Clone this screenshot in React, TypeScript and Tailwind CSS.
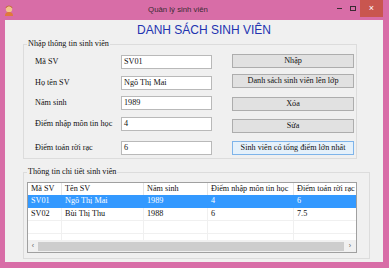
const serif = "font-['Liberation_Serif','Times_New_Roman',serif]";

type Student = { id: string; name: string; year: string; it: string; math: string };

const students: Student[] = [
  { id: 'SV01', name: 'Ngô Thị Mai', year: '1989', it: '4', math: '6' },
  { id: 'SV02', name: 'Bùi Thị Thu', year: '1988', it: '6', math: '7.5' },
];

const fields = [
  { label: 'Mã SV', value: 'SV01', mt: 'mt-[5px]' },
  { label: 'Họ tên SV', value: 'Ngô Thị Mai', mt: 'mt-[7px]' },
  { label: 'Năm sinh', value: '1989', mt: 'mt-[6px]' },
  { label: 'Điểm nhập môn tin học', value: '4', mt: 'mt-[7px]' },
  { label: 'Điểm toán rời rạc', value: '6', mt: 'mt-[10px]' },
];

const buttons = [
  { text: 'Nhập', mt: 'mt-[4px]' },
  { text: 'Danh sách sinh viên lên lớp', mt: 'mt-[6px]' },
  { text: 'Xóa', mt: 'mt-[9px]' },
  { text: 'Sửa', mt: 'mt-[8px]' },
  { text: 'Sinh viên có tổng điểm lớn nhất', mt: 'mt-[8px]', active: true },
];

const cols: { title: string; w: string; get: (s: Student) => string }[] = [
  { title: 'Mã SV', w: 'w-[34px]', get: (s) => s.id },
  { title: 'Tên SV', w: 'w-[82px]', get: (s) => s.name },
  { title: 'Năm sinh', w: 'w-[64px]', get: (s) => s.year },
  { title: 'Điểm nhập môn tin học', w: 'w-[86px]', get: (s) => s.it },
  { title: 'Điểm toán rời rạc', w: 'w-[70px]', get: (s) => s.math },
];

const AppIcon = () => (
  <svg width="10" height="11" viewBox="0 0 10 11">
    <circle cx="5" cy="4" r="3.2" fill="#f2c48a" />
    <path d="M1.8 3.2 Q5 -0.6 8.2 3.2 L8.2 2 Q5 -1.2 1.8 2 Z" fill="#b4542c" />
    <path d="M1 11 Q1 7 5 7 Q9 7 9 11 Z" fill="#e0793a" />
  </svg>
);

const App = () => {
  return (
    <div className="w-[389px] h-[268px] bg-[#d86da7] flex flex-col overflow-hidden">
      {/* Title bar */}
      <div className="h-[20px] flex items-center relative">
        <div className="pl-[4px] pt-[1px]">
          <AppIcon />
        </div>
        <div className="flex-1 text-center text-[7.8px] text-[#3a2a33] font-['Liberation_Sans',Arial,sans-serif] pl-[10px]">
          Quản lý sinh viên
        </div>
        <div className="flex items-start h-full">
          <div className="w-[14px] h-[17px] flex items-center justify-center">
            <div className="w-[5px] h-[1px] bg-[#3a2a33]" />
          </div>
          <div className="w-[14px] h-[17px] flex items-center justify-center">
            <div className="w-[6px] h-[5px] border border-[#3a2a33]" />
          </div>
          <div className="w-[23px] h-[17px] bg-[#c9564f] flex items-center justify-center text-white text-[9px] leading-none font-['Liberation_Sans',Arial,sans-serif] mr-[6px]">
            ×
          </div>
        </div>
      </div>

      {/* Client area */}
      <div className={`ml-[5px] mr-[6px] mb-[6px] flex-1 bg-[#f0f0f0] flex flex-col text-[8.2px] text-[#111] ${serif}`}>
        <div className="h-[18px] pt-[3px] pl-[20px] text-center text-[12px] leading-[14px] text-[#2233b0] font-['Liberation_Sans',Arial,sans-serif]">
          DANH SÁCH SINH VIÊN
        </div>

        {/* Input group */}
        <fieldset className="ml-[18px] w-[334px] h-[121px] border border-[#dcdcdc]">
          <legend className="ml-[3px] px-[1px] leading-[12px]">Nhập thông tin sinh viên</legend>
          <div className="flex pl-[11px]">
            <div className="flex flex-col">
              {fields.map((f) => (
                <div key={f.label} className={`flex items-center ${f.mt}`}>
                  <div className="w-[86px] leading-[14px]">{f.label}</div>
                  <div className="w-[91px] h-[14px] bg-white border border-[#b9b9b9] pl-[2px] leading-[12px]">
                    {f.value}
                  </div>
                </div>
              ))}
            </div>
            <div className="flex flex-col ml-[20px]">
              {buttons.map((b) => (
                <div
                  key={b.text}
                  className={`w-[122px] h-[14px] border text-center leading-[12px] ${b.mt} ${
                    b.active ? 'bg-[#e5f1fb] border-[#7eb4ea]' : 'bg-[#e1e1e1] border-[#adadad]'
                  }`}
                >
                  {b.text}
                </div>
              ))}
            </div>
          </div>
        </fieldset>

        {/* Details group */}
        <fieldset className="ml-[18px] mt-[7px] w-[347px] h-[93px] border border-[#dcdcdc]">
          <legend className="ml-[3px] px-[1px] leading-[12px]">Thông tin chi tiết sinh viên</legend>
          <div className="pl-[3px] pt-[4px]">
            <div className="w-[330px] h-[71px] bg-white border border-[#a0a0a0] flex flex-col overflow-hidden">
              <div className="flex h-[12px] shrink-0">
                {cols.map((c) => (
                  <div key={c.title} className={`${c.w} shrink-0 border-r border-[#e5e5e5] pl-[3px] leading-[12px] whitespace-nowrap overflow-hidden`}>
                    {c.title}
                  </div>
                ))}
              </div>
              {students.map((s, i) => (
                <div
                  key={s.id}
                  className={`flex h-[13px] shrink-0 border-b ${i === 0 ? 'bg-[#3399ff] text-white border-[#3399ff]' : 'border-[#f0f0f0]'}`}
                >
                  {cols.map((c) => (
                    <div key={c.title} className={`${c.w} shrink-0 border-r ${i === 0 ? 'border-[#3399ff]' : 'border-[#f0f0f0]'} pl-[3px] leading-[12px] whitespace-nowrap`}>
                      {c.get(s)}
                    </div>
                  ))}
                </div>
              ))}
              <div className="flex-1 flex flex-col overflow-hidden">
                {[0, 1].map((r) => (
                  <div key={r} className="flex h-[13px] shrink-0 border-b border-[#f0f0f0]">
                    {cols.map((c) => (
                      <div key={c.title} className={`${c.w} shrink-0 border-r border-[#f0f0f0]`} />
                    ))}
                  </div>
                ))}
              </div>
              {/* Horizontal scrollbar */}
              <div className="h-[12px] shrink-0 bg-[#f0f0f0] flex items-center font-['Liberation_Sans',Arial,sans-serif] text-[7px] text-[#606060]">
                <div className="w-[10px] h-[12px] leading-[11px] text-center">‹</div>
                <div className="flex-1 h-[9px] bg-[#cdcdcd]" />
                <div className="w-[12px] h-[12px] leading-[11px] text-center">›</div>
              </div>
            </div>
          </div>
        </fieldset>
      </div>
    </div>
  );
};

export default App;
